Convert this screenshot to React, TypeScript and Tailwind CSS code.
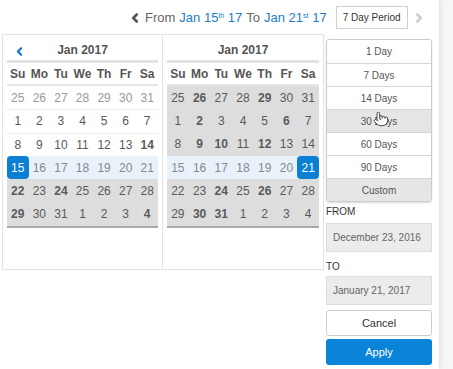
import { ChevronLeft, ChevronRight, Pointer } from "lucide-react";

type Row = { days: string[]; bg: "white" | "blue" | "gray"; faded?: boolean; sel?: number; bold?: number[] };

const leftRows: Row[] = [
    { days: ["25", "26", "27", "28", "29", "30", "31"], bg: "white", faded: true },
    { days: ["1", "2", "3", "4", "5", "6", "7"], bg: "white" },
    { days: ["8", "9", "10", "11", "12", "13", "14"], bg: "white", bold: [6] },
    { days: ["15", "16", "17", "18", "19", "20", "21"], bg: "blue", sel: 0 },
    { days: ["22", "23", "24", "25", "26", "27", "28"], bg: "gray", bold: [0, 2] },
    { days: ["29", "30", "31", "1", "2", "3", "4"], bg: "gray", bold: [0, 6] },
];

const rightRows: Row[] = [
    { days: ["25", "26", "27", "28", "29", "30", "31"], bg: "gray", bold: [1, 4] },
    { days: ["1", "2", "3", "4", "5", "6", "7"], bg: "gray", bold: [1, 5] },
    { days: ["8", "9", "10", "11", "12", "13", "14"], bg: "gray", bold: [1, 2, 4] },
    { days: ["15", "16", "17", "18", "19", "20", "21"], bg: "blue", sel: 6 },
    { days: ["22", "23", "24", "25", "26", "27", "28"], bg: "gray", bold: [2, 4] },
    { days: ["29", "30", "31", "1", "2", "3", "4"], bg: "gray", bold: [1, 2] },
];

const weekdays = ["Su", "Mo", "Tu", "We", "Th", "Fr", "Sa"];

function Calendar({ rows, arrow, last }: { rows: Row[]; arrow?: boolean; last?: boolean }) {
    return (
        <div className={`w-[160px] h-full px-[4px] ${last ? "" : "border-r border-[#e3e3e3]"}`}>
            <div className="relative h-[28px] pt-[5px] flex items-center justify-center border-b-[3px] border-[#e2e2e2] text-[12px] font-bold text-[#555]">
                {arrow && (
                    <ChevronLeft className="absolute left-[6px] top-[10px] w-[13px] h-[13px] text-[#1577c4]" strokeWidth={4} />
                )}
                Jan 2017
            </div>
            <div className="grid grid-cols-7 h-[23px] items-center border-b-2 border-[#e6e6e6] text-[12px] font-bold text-[#555]">
                {weekdays.map((d) => (
                    <div key={d} className="text-center">{d}</div>
                ))}
            </div>
            <div className="border-b-2 border-[#a9a9a9]">
                {rows.map((r, i) => (
                    <div
                        key={i}
                        className={`grid grid-cols-7 h-[23.3px] items-center text-[12px] ${
                            r.bg === "white"
                                ? "bg-white border-t border-[#ececec]"
                                : r.bg === "blue"
                                  ? "bg-[#e9f1fb]"
                                  : "bg-[#dddddd]"
                        } ${i === 0 ? "border-t-0" : ""}`}
                    >
                        {r.days.map((d, j) => (
                            <div
                                key={j}
                                className={`h-full flex items-center justify-center ${
                                    r.sel === j
                                        ? "bg-[#0b7fd3] text-white rounded-[4px]"
                                        : r.faded
                                          ? "text-[#999]"
                                          : r.bg === "blue"
                                            ? "text-[#888]"
                                            : "text-[#5a5a5a]"
                                } ${r.bold?.includes(j) ? "font-bold" : ""}`}
                            >
                                {d}
                            </div>
                        ))}
                    </div>
                ))}
            </div>
        </div>
    );
}

const ranges = ["1 Day", "7 Days", "14 Days", "30 Days", "60 Days", "90 Days", "Custom"];

export default function App() {
    return (
        <div
            className="w-[453px] h-[369px] bg-[#f6f6f6] overflow-hidden text-[#555]"
            style={{ fontFamily: '"Liberation Sans", Arial, sans-serif' }}
        >
            <div className="w-[439px] h-[369px] bg-white shadow-[2px_0_4px_rgba(0,0,0,0.08)]">
                <div className="h-[34px] flex items-center pl-[128px] pt-[1px]">
                    <ChevronLeft className="w-[14px] h-[16px] text-[#555]" strokeWidth={4.5} />
                    <span className="ml-[3px] text-[13px] text-[#666]">From</span>
                    <span className="ml-[4px] text-[13px] text-[#1b7cc5]">
                        Jan 15<sup className="text-[7px]">th</sup> 17
                    </span>
                    <span className="ml-[4px] text-[13px] text-[#666]">To</span>
                    <span className="ml-[4px] text-[13px] text-[#1b7cc5]">
                        Jan 21<sup className="text-[7px]">st</sup> 17
                    </span>
                    <div className="ml-[9px] w-[72px] h-[23px] border border-[#cfcfcf] flex items-center justify-center text-[10px] text-[#333]">
                        7 Day Period
                    </div>
                    <ChevronRight className="ml-[4px] w-[14px] h-[16px] text-[#cfcfcf]" strokeWidth={4.5} />
                </div>
                <div className="flex">
                    <div className="ml-[2px] h-[236px] flex border border-[#e3e3e3]">
                        <Calendar rows={leftRows} arrow />
                        <Calendar rows={rightRows} last />
                    </div>
                    <div className="ml-[2px] mt-[5px] w-[106px] flex flex-col">
                        <div className="rounded-[3px] border border-[#cccccc] shadow-[0_1px_2px_rgba(0,0,0,0.15)] overflow-hidden">
                            {ranges.map((r, i) => (
                                <div
                                    key={r}
                                    className={`relative h-[23px] flex items-center justify-center text-[10px] text-[#555] ${
                                        i > 0 ? "border-t border-[#d6d6d6]" : ""
                                    } ${r === "30 Days" || r === "Custom" ? "bg-[#e6e6e6]" : "bg-white"}`}
                                >
                                    {r}
                                    {r === "30 Days" && (
                                        <Pointer
                                            className="absolute left-[46px] top-[1px] w-[16px] h-[16px] text-[#444] fill-white"
                                            strokeWidth={1.5}
                                        />
                                    )}
                                </div>
                            ))}
                        </div>
                        <div className="mt-[4px] text-[10px] leading-[12px] text-[#333]">FROM</div>
                        <div className="mt-[5px] h-[29px] bg-[#ececec] border border-[#dcdcdc] flex items-center px-[6px] text-[10px] text-[#666]">
                            December 23, 2016
                        </div>
                        <div className="mt-[9px] text-[10px] leading-[12px] text-[#333]">TO</div>
                        <div className="mt-[3px] h-[29px] bg-[#ececec] border border-[#dcdcdc] flex items-center px-[6px] text-[10px] text-[#666]">
                            January 21, 2017
                        </div>
                        <div className="mt-[5px] h-[26px] bg-white border border-[#cccccc] rounded-[3px] flex items-center justify-center text-[11px] text-[#333]">
                            Cancel
                        </div>
                        <div className="mt-[3px] h-[26px] bg-[#0a84d8] rounded-[3px] flex items-center justify-center text-[11px] text-white">
                            Apply
                        </div>
                    </div>
                </div>
            </div>
        </div>
    );
}
